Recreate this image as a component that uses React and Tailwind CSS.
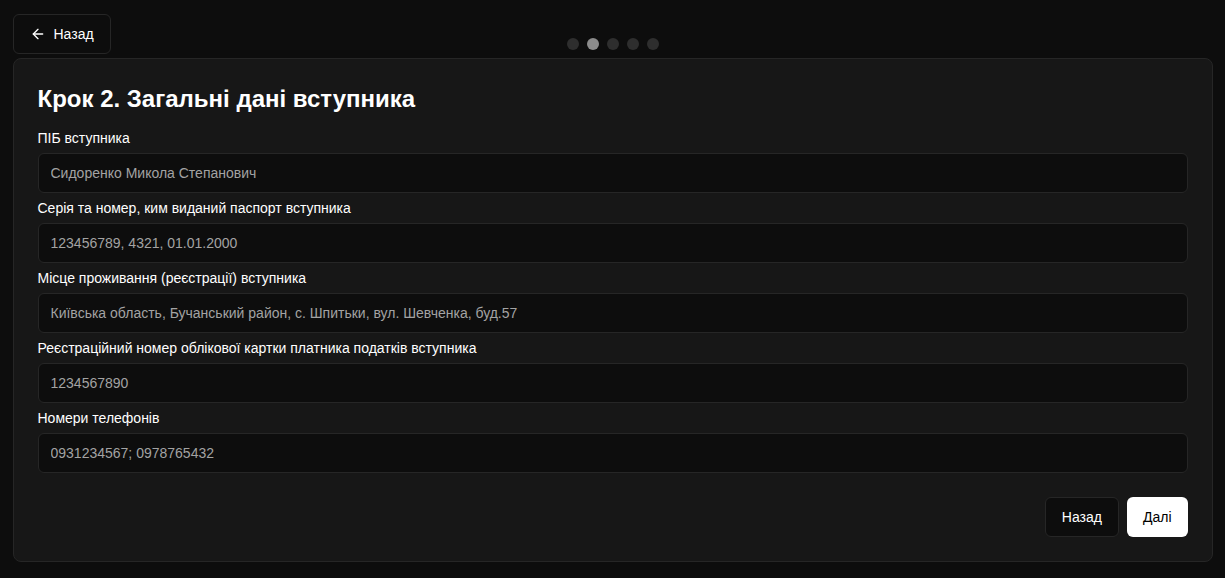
import React, { useState } from "react";
import { ArrowLeft } from "lucide-react";

const fields = [
  { id: "pib", label: "ПІБ вступника", value: "Сидоренко Микола Степанович" },
  {
    id: "passport",
    label: "Серія та номер, ким виданий паспорт вступника",
    value: "123456789, 4321, 01.01.2000",
  },
  {
    id: "address",
    label: "Місце проживання (реєстрації) вступника",
    value: "Київська область, Бучанський район, с. Шпитьки, вул. Шевченка, буд.57",
  },
  {
    id: "tax",
    label: "Реєстраційний номер облікової картки платника податків вступника",
    value: "1234567890",
  },
  { id: "phones", label: "Номери телефонів", value: "0931234567; 0978765432" },
];

const App = () => {
  const [values, setValues] = useState(
    Object.fromEntries(fields.map((f) => [f.id, f.value]))
  );
  const step = 1;

  return (
    <div
      className="min-h-screen bg-[#0d0d0d] text-white"
      style={{ fontFamily: '"Liberation Sans", Arial, sans-serif' }}
    >
      <div className="max-w-[1200px] mx-auto pt-[14px] pb-4">
        <div className="grid grid-cols-[1fr_auto_1fr] h-10">
          <div>
            <button className="h-10 flex items-center gap-2 px-4 rounded-md border border-[#262626] bg-[#0d0d0d] text-sm hover:bg-[#1a1a1a]">
              <ArrowLeft size={16} strokeWidth={2} />
              Назад
            </button>
          </div>
          <div className="flex items-end gap-2 pb-1">
            {[0, 1, 2, 3, 4].map((i) => (
              <span
                key={i}
                className={
                  i === step
                    ? "w-3 h-3 rounded-full bg-[#8c8c8c]"
                    : "w-3 h-3 rounded-full bg-[#2e2e2e]"
                }
              />
            ))}
          </div>
          <div />
        </div>

        <div className="mt-1 bg-[#171717] border border-[#262626] rounded-lg p-6">
          <h2 className="text-2xl font-bold mb-[13px]">Крок 2. Загальні дані вступника</h2>

          <div className="space-y-1">
            {fields.map((f, i) => (
              <div key={f.id} className={i > 0 ? "pt-px" : ""}>
                <label htmlFor={f.id} className="block text-sm mb-[5px]">
                  {f.label}
                </label>
                <input
                  id={f.id}
                  type="text"
                  value={values[f.id]}
                  onChange={(e) => setValues({ ...values, [f.id]: e.target.value })}
                  className="w-full h-10 px-3 rounded-md bg-[#0d0d0d] border border-[#262626] text-sm text-[#a3a3a3] focus:outline-none"
                />
              </div>
            ))}
          </div>

          <div className="flex justify-end gap-2 mt-6">
            <button className="h-10 px-4 rounded-md border border-[#262626] bg-[#0d0d0d] text-sm">
              Назад
            </button>
            <button className="h-10 px-4 rounded-md bg-white text-black text-sm">
              Далі
            </button>
          </div>
        </div>
      </div>
    </div>
  );
};

export default App;
